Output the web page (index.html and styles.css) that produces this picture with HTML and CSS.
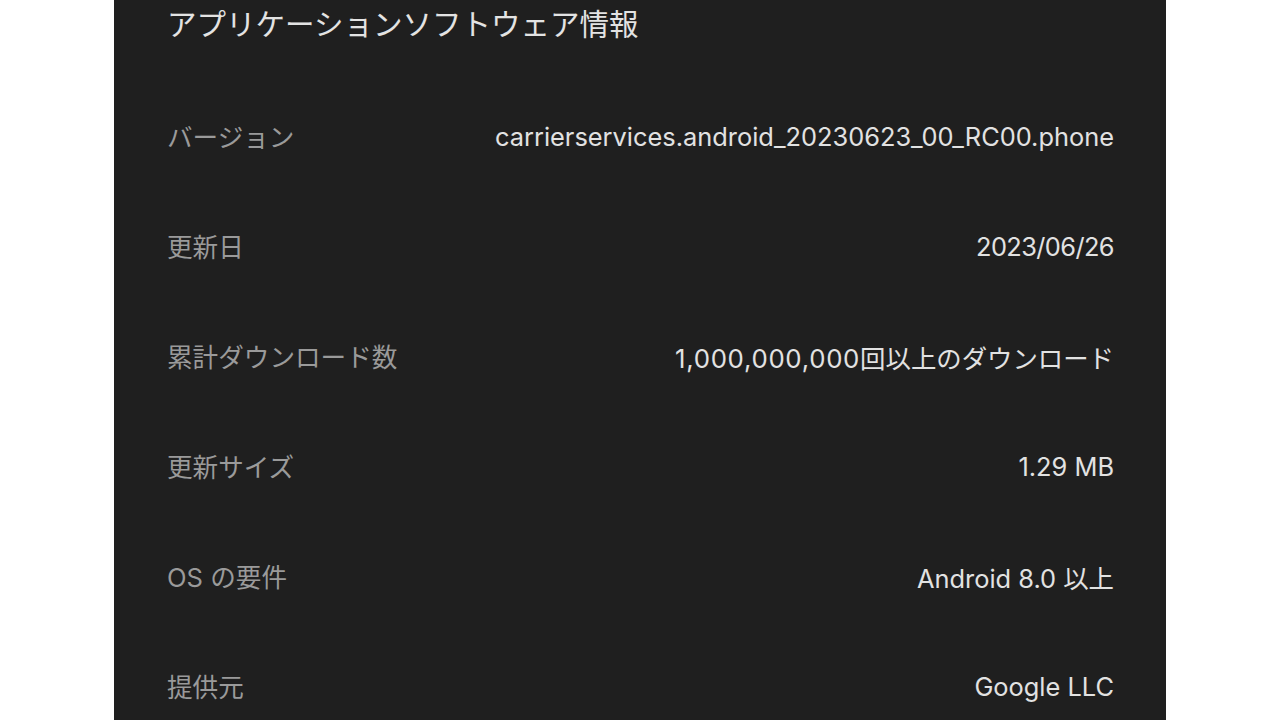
FILE: index.html
```html
<!DOCTYPE html>
<html lang="ja">
<head>
<meta charset="utf-8">
<title>アプリケーションソフトウェア情報</title>
<link rel="stylesheet" href="styles.css">
</head>
<body>
<div class="panel">
  <h1 class="title">アプリケーションソフトウェア情報</h1>
  <ul class="info">
    <li><span class="label">バージョン</span><span class="value">carrierservices.android_20230623_00_RC00.phone</span></li>
    <li><span class="label">更新日</span><span class="value date">2023/06/26</span></li>
    <li><span class="label">累計ダウンロード数</span><span class="value"><span class="num">1,000,000,000</span>回以上のダウンロード</span></li>
    <li><span class="label">更新サイズ</span><span class="value">1.29 MB</span></li>
    <li><span class="label">OS の要件</span><span class="value">Android 8.0 以上</span></li>
    <li><span class="label">提供元</span><span class="value">Google LLC</span></li>
  </ul>
</div>
</body>
</html>
```
FILE: styles.css
```css
*{ padding:0; margin:0; list-style:none; box-sizing:border-box;}
html,body{ height:100%; background:#fff;}
body{ font-family:Inter, "Noto Sans CJK JP", sans-serif; overflow:hidden;}

.panel{
  width:1052px;
  height:720px;
  margin:0 auto 0 114px;
  background:#1f1f1f;
  padding:0 52px 0 53px;
}
.title{
  font-size:29.5px;
  font-weight:400;
  color:#e3e3e3;
  line-height:48px;
}
.info{ margin-top:34px;}
.info li{
  display:flex;
  justify-content:space-between;
  align-items:center;
  height:110px;
}
.label{ color:#9a9a9a; font-size:25.6px; padding-bottom:3px;}
.value{ color:#e2e2e2; font-size:25.4px; padding-bottom:1px;}
.value .num{ font-size:25.8px; letter-spacing:0.7px;}
.value.date{ letter-spacing:-0.6px;}
```
